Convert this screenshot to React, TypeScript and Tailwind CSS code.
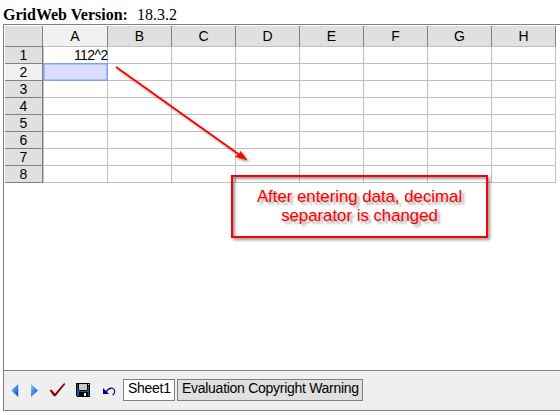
const columns = ['A', 'B', 'C', 'D', 'E', 'F', 'G', 'H'];
const rows = [1, 2, 3, 4, 5, 6, 7, 8];

function Grid() {
  return (
    <div className="mt-px ml-px w-[552px] text-[14px] leading-4">
      <div className="flex h-[21px]">
        <div className="w-[38px] border-r border-b border-[#808080] bg-[#e0e0e0]" />
        {columns.map((c) => (
          <div
            key={c}
            className={`h-full border-r border-b border-r-[#808080] border-b-[#c0c0c0] pt-0.5 text-center ${c === 'A' ? 'w-[65px] bg-[#f1f1f1]' : 'w-16 bg-[#e0e0e0]'}`}
          >
            {c}
          </div>
        ))}
      </div>
      {rows.map((r) => (
        <div key={r} className="flex h-[17px]">
          <div
            className={`w-[37px] border-b border-[#808080] text-center ${r === 2 ? 'bg-[#f1f1f1]' : 'bg-[#e0e0e0]'}`}
          >
            {r}
          </div>
          <div className="w-px bg-[#808080]" />
          {columns.map((c) => (
            <div
              key={c}
              className={`relative h-full border-r border-b border-[#c0c0c0] text-right ${c === 'A' ? 'w-[65px] border-l' : 'w-16'}`}
            >
              {c === 'A' && r === 1 && <span className="-mr-[0.6px] tracking-[-0.6px]">112^2</span>}
              {c === 'A' && r === 2 && (
                <div className="absolute -top-px -left-px h-[18px] w-[65px] border border-[#7ba4f0] bg-[#dcdcff] shadow-[inset_0_0_0_1px_#a5c2f8]" />
              )}
            </div>
          ))}
        </div>
      ))}
    </div>
  );
}

function Toolbar() {
  return (
    <div className="flex h-10 items-start border-t border-[#808080] bg-[#efefef] text-[14px] leading-[17px] tracking-[-0.28px]">
      <svg width="119" height="39" viewBox="4 371 119 39" className="shrink-0">
        <defs>
          <linearGradient id="blue" x1="0" y1="0" x2="1" y2="1">
            <stop offset="0" stopColor="#8cc4ff" />
            <stop offset="0.5" stopColor="#3c8cf0" />
            <stop offset="1" stopColor="#0040a8" />
          </linearGradient>
        </defs>
        <path d="M18.2 384v13l-7-6.5z" fill="url(#blue)" />
        <path d="M31 384v13l7-6.5z" fill="url(#blue)" />
        <path d="M50 390.5l1.5-.5 3.5 4 9-10.5 1 .5-9.7 12h-1.3z" fill="#800000" stroke="#800000" strokeWidth="0.7" />
        <g shapeRendering="crispEdges">
          <path d="M76 383h14v14h-13l-1-1z" fill="#000" />
          <path d="M77 384h1v6h1v1h8v-1h1v-4h1v10h-1v-4h-9v4h-2z" fill="#085c90" />
          <path d="M79 384h8v6h-8z" fill="#c6c6c6" />
          <path d="M88 384h1v1h-1zM84 393h2v3h-2z" fill="#fff" />
        </g>
        <path d="M106 392c2-3 4-4.5 6.5-3.7 3.2 1.2 2.8 5 0 6.7" fill="none" stroke="#000080" strokeWidth="1.1" />
        <path d="M103 388v6h6z" fill="#000080" />
      </svg>
      <div className="mt-2 h-[22px] w-[52px] border border-[#808080] bg-white pl-1 whitespace-nowrap">
        Sheet1
      </div>
      <div className="mt-2 ml-0.5 h-[22px] w-[186px] border border-[#808080] bg-[#e0e0e0] pl-1 whitespace-nowrap">
        Evaluation Copyright Warning
      </div>
    </div>
  );
}

function Annotation() {
  return (
    <>
      <svg className="absolute top-0 left-0 drop-shadow-[2px_2px_1px_rgba(0,0,0,0.4)]" width="560" height="260">
        <path d="M116 67L239 154.5" stroke="#f00" strokeWidth="1.7" />
        <path d="M246.5 159.5l-6-8-1 3-4 2z" fill="#f00" stroke="#f00" />
      </svg>
      <div className="absolute top-[175px] left-[231px] flex h-[63px] w-[257px] flex-col items-center border-2 border-[#f00] pt-[10px] text-[16.8px] leading-[19px] text-[#f00] shadow-[2px_2px_3px_rgba(0,0,0,0.4),inset_2px_2px_3px_rgba(0,0,0,0.4)] [text-shadow:1px_1px_1px_rgba(0,0,0,0.12),3px_3px_2px_rgba(0,0,0,0.3)]">
        <div className="whitespace-nowrap">After entering data, decimal</div>
        <div className="whitespace-nowrap">separator is changed</div>
      </div>
    </>
  );
}

export default function App() {
  return (
    <div className="relative h-[415px] w-[560px] overflow-hidden bg-white font-['Liberation_Sans',Arial,sans-serif] text-black">
      <div className="flex h-6 items-start gap-[9px] pt-1.5 pl-[3px] font-['Liberation_Serif',serif] text-[16px] leading-[18px] whitespace-nowrap">
        <b>GridWeb Version:</b>
        <span>18.3.2</span>
      </div>
      <div className="ml-[3px] flex h-[387px] w-[557px] flex-col justify-between border-y border-l border-[#808080]">
        <Grid />
        <Toolbar />
      </div>
      <Annotation />
    </div>
  );
}
